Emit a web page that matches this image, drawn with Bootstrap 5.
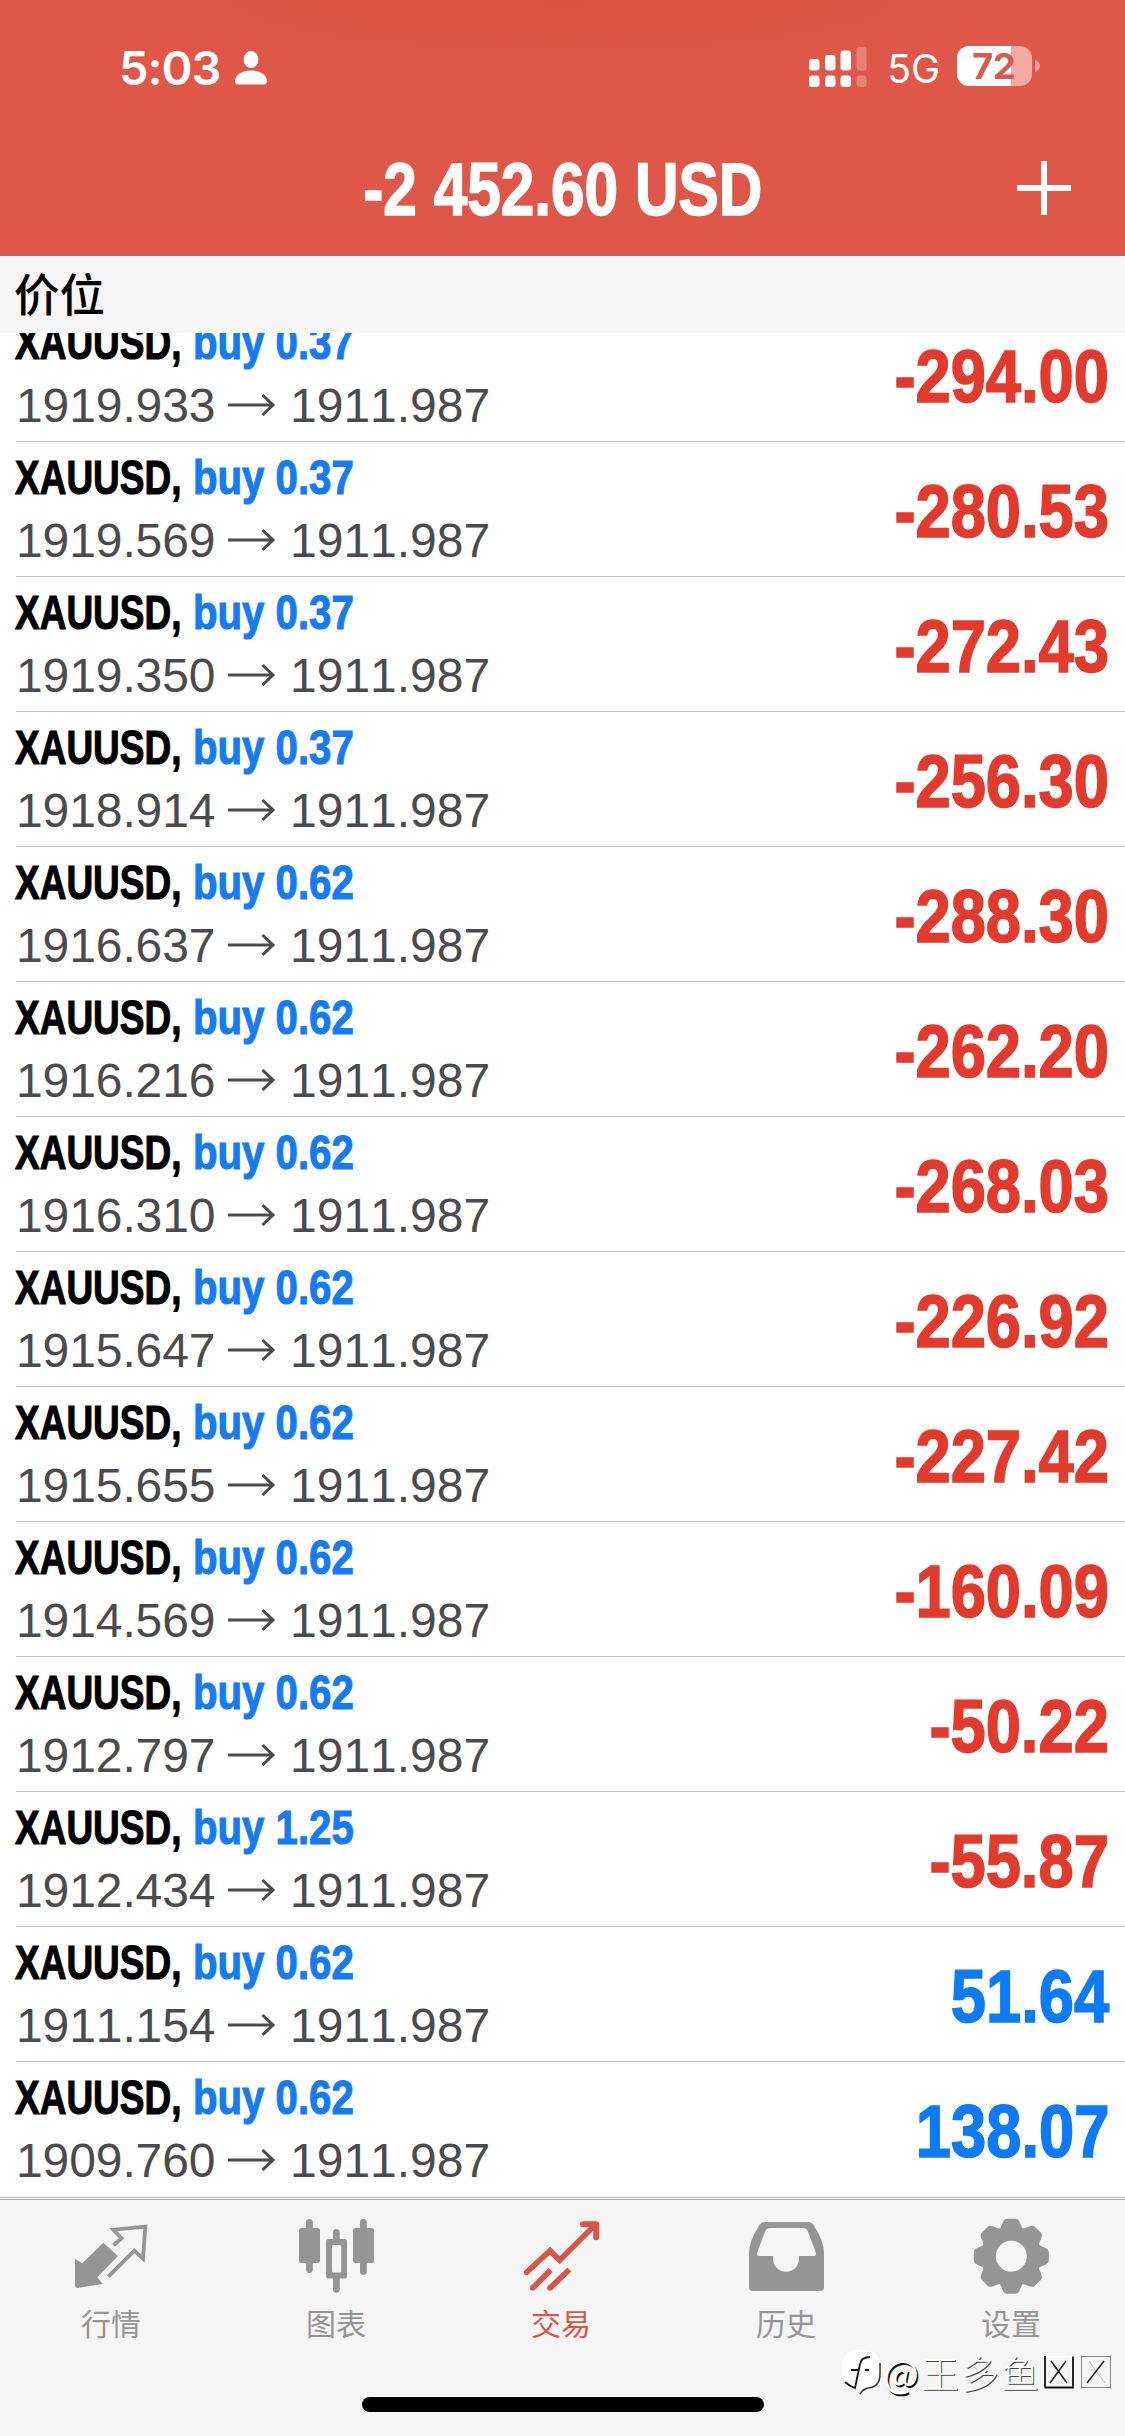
<!DOCTYPE html>
<html lang="zh-CN">
<head>
<meta charset="utf-8">
<meta name="viewport" content="width=device-width, initial-scale=1">
<title>交易</title>
<link href="https://cdn.jsdelivr.net/npm/bootstrap@5.3.0/dist/css/bootstrap.min.css" rel="stylesheet">
<style>
  body { width: 1125px; height: 2436px; overflow: hidden; background: #fff; font-family: "Liberation Sans", "Noto Sans CJK SC", sans-serif; font-kerning: none; }
  .screen { width: 1125px; height: 2436px; }
  .app-head { height: 256px; background: radial-gradient(ellipse 340px 50px at 562px 0, #dc5243, #df5748); border-bottom: 2px solid #c9605a; color: #fff; }
  .status { height: 108px; padding: 28px 85px 0 119px; font-family: Inter, sans-serif; }
  .clock { font-size: 47px; font-weight: 600; line-height: 80px; letter-spacing: -1px; }
  .net { font-size: 39px; line-height: 81px; margin-left: 20px; margin-right: 17px; }
  .title-bar { height: 146px; }
  .narrow { display: inline-block; white-space: pre; font-weight: 700; transform-origin: 0 50%; -webkit-text-stroke: 1.1px currentColor; }
  .total { font-size: 74px; line-height: 80px; transform: scaleX(.815); transform-origin: 50% 50%; margin-top: 42px; -webkit-text-stroke-width: 1.6px; }
  .plus { right: 53px; top: 52px; }
  .section-head { height: 77px; padding: 0 14px; background: #f6f6f6; font: 500 45.500px/73px "Noto Sans CJK SC", sans-serif; color: #000; }
  .deals { height: 1864px; overflow: hidden; }
  .deal { height: 135px; flex: none; margin-left: 16px; padding: 0 16px 0 0; border-bottom: 1px solid #c4c4c6; }
  .deal:last-child { border-color: transparent; }
  .head-line { height: 62px; font-size: 49px; line-height: 62px; margin-left: -1px; }
  .sym { width: 178px; color: #000; transform: scaleX(.755); }
  .side { color: #147bf3; transform: scaleX(.82); }
  .prices { height: 65px; font-size: 48px; line-height: 65px; color: #4b4b4e; }
  .price { width: 197px; letter-spacing: -.1px; }
  .arrow { width: 77px; padding-left: 15px; }
  .profit { font-size: 74px; line-height: 80px; transform: scaleX(.855); transform-origin: 100% 50%; margin-top: 6px; color: #e23b2e; -webkit-text-stroke-width: 1.6px; }
  .gain { color: #0d7bf8; }
  .tabs { height: 239px; background: #f5f5f5; border-top: 1px solid #b8b8b8; box-shadow: inset 0 1px #f5f5f5, inset 0 2px #a9a9a9; color: #959595; }
  .tab-row { margin-left: -1.500px; margin-right: 1.500px; padding-top: 17px; }
  .tab-row svg { display: block; }
  .tab-item { color: inherit; flex: 1 1 0; font: 400 30px/44px "Noto Sans CJK SC", sans-serif; text-decoration: none; }
  .tab-item span { margin-top: 5px; }
  .tab-item.on { color: #d95549; }
  .home { width: 402px; height: 15px; left: 362px; bottom: 24px; background: #000; }
  .mark-line { left: 841px; bottom: 38px; height: 52px; font: 400 38px/52px "Noto Sans CJK SC", sans-serif; color: #fdfdfd; text-shadow: 1.500px 1.500px 0 #111; }
  .mark-line .han { letter-spacing: 2px; margin-left: 2px; font-weight: 300; text-shadow: 1px 1px 0 #444; }
</style>
<script src="https://cdn.jsdelivr.net/npm/bootstrap@5.3.0/dist/js/bootstrap.bundle.min.js"></script>
</head>
<body>
<div class="screen d-flex flex-column position-relative">
  <header class="app-head">
    <div class="status d-flex align-items-start justify-content-between">
      <div class="d-flex">
        <span class="clock">5:03</span>
        <svg width="32" height="34" viewBox="0 0 32 34" fill="#fff" style="margin:23px 0 0 15px"><ellipse cx="16" cy="8.500" rx="7.400" ry="8.500"/><path d="M0 30C0 24 7 19.500 16 19.500S32 24 32 30Q32 33.500 28.500 33.500H3.500Q0 33.500 0 30Z"/></svg>
      </div>
      <div class="d-flex">
        <svg width="58" height="40" viewBox="0 0 58 40" fill="#fff" style="margin-top:19px"><rect y="12" width="10.500" height="11.500" rx="3"/><rect y="28.500" width="10.500" height="11.500" rx="3"/><rect x="16" y="8" width="10.500" height="15.500" rx="3"/><rect x="16" y="28.500" width="10.500" height="11.500" rx="3"/><rect x="31.500" y="3.500" width="10.500" height="20" rx="3"/><rect x="31.500" y="28.500" width="10.500" height="11.500" rx="3"/><g opacity=".25"><rect x="47.500" width="10" height="23.500" rx="3"/><rect x="47.500" y="28.500" width="10" height="11.500" rx="3"/></g></svg>
        <span class="net">5G</span>
        <svg width="83" height="40" viewBox="0 0 83 40" style="margin-top:18px"><defs><clipPath id="charge"><path d="M0 0H54V40H0Z"/></clipPath></defs><rect width="75" height="40" rx="12" fill="#f3aaa2"/><rect width="75" height="40" rx="12" fill="#fff" clip-path="url(#charge)"/><path d="M78 14Q83 16 83 20T78 26Z" fill="#f0a098"/><text x="37" y="33" text-anchor="middle" font-family="Inter, sans-serif" font-size="36" font-weight="700" fill="#d65a50">72</text></svg>
      </div>
    </div>
    <div class="title-bar d-flex justify-content-center align-items-start position-relative">
      <h1 class="narrow total mb-0">-2 452.60 USD</h1>
      <svg class="plus position-absolute" width="56" height="56" viewBox="0 0 56 56" stroke="#fff" stroke-width="6"><path d="M28 1V55M1 28H55"/></svg>
    </div>
  </header>
  <div class="section-head">价位</div>

  <main class="deals d-flex flex-column justify-content-end">
    <div class="deal d-flex justify-content-between align-items-center"><div><div class="head-line d-flex"><span class="narrow sym">XAUUSD,</span><span class="narrow side">buy 0.37</span></div><div class="prices d-flex align-items-center"><span class="price">1919.933</span><svg class="arrow" width="78" height="24"><use href="#to"/></svg><span>1911.987</span></div></div><span class="narrow profit">-294.00</span></div>
    <div class="deal d-flex justify-content-between align-items-center"><div><div class="head-line d-flex"><span class="narrow sym">XAUUSD,</span><span class="narrow side">buy 0.37</span></div><div class="prices d-flex align-items-center"><span class="price">1919.569</span><svg class="arrow" width="78" height="24"><use href="#to"/></svg><span>1911.987</span></div></div><span class="narrow profit">-280.53</span></div>
    <div class="deal d-flex justify-content-between align-items-center"><div><div class="head-line d-flex"><span class="narrow sym">XAUUSD,</span><span class="narrow side">buy 0.37</span></div><div class="prices d-flex align-items-center"><span class="price">1919.350</span><svg class="arrow" width="78" height="24"><use href="#to"/></svg><span>1911.987</span></div></div><span class="narrow profit">-272.43</span></div>
    <div class="deal d-flex justify-content-between align-items-center"><div><div class="head-line d-flex"><span class="narrow sym">XAUUSD,</span><span class="narrow side">buy 0.37</span></div><div class="prices d-flex align-items-center"><span class="price">1918.914</span><svg class="arrow" width="78" height="24"><use href="#to"/></svg><span>1911.987</span></div></div><span class="narrow profit">-256.30</span></div>
    <div class="deal d-flex justify-content-between align-items-center"><div><div class="head-line d-flex"><span class="narrow sym">XAUUSD,</span><span class="narrow side">buy 0.62</span></div><div class="prices d-flex align-items-center"><span class="price">1916.637</span><svg class="arrow" width="78" height="24"><use href="#to"/></svg><span>1911.987</span></div></div><span class="narrow profit">-288.30</span></div>
    <div class="deal d-flex justify-content-between align-items-center"><div><div class="head-line d-flex"><span class="narrow sym">XAUUSD,</span><span class="narrow side">buy 0.62</span></div><div class="prices d-flex align-items-center"><span class="price">1916.216</span><svg class="arrow" width="78" height="24"><use href="#to"/></svg><span>1911.987</span></div></div><span class="narrow profit">-262.20</span></div>
    <div class="deal d-flex justify-content-between align-items-center"><div><div class="head-line d-flex"><span class="narrow sym">XAUUSD,</span><span class="narrow side">buy 0.62</span></div><div class="prices d-flex align-items-center"><span class="price">1916.310</span><svg class="arrow" width="78" height="24"><use href="#to"/></svg><span>1911.987</span></div></div><span class="narrow profit">-268.03</span></div>
    <div class="deal d-flex justify-content-between align-items-center"><div><div class="head-line d-flex"><span class="narrow sym">XAUUSD,</span><span class="narrow side">buy 0.62</span></div><div class="prices d-flex align-items-center"><span class="price">1915.647</span><svg class="arrow" width="78" height="24"><use href="#to"/></svg><span>1911.987</span></div></div><span class="narrow profit">-226.92</span></div>
    <div class="deal d-flex justify-content-between align-items-center"><div><div class="head-line d-flex"><span class="narrow sym">XAUUSD,</span><span class="narrow side">buy 0.62</span></div><div class="prices d-flex align-items-center"><span class="price">1915.655</span><svg class="arrow" width="78" height="24"><use href="#to"/></svg><span>1911.987</span></div></div><span class="narrow profit">-227.42</span></div>
    <div class="deal d-flex justify-content-between align-items-center"><div><div class="head-line d-flex"><span class="narrow sym">XAUUSD,</span><span class="narrow side">buy 0.62</span></div><div class="prices d-flex align-items-center"><span class="price">1914.569</span><svg class="arrow" width="78" height="24"><use href="#to"/></svg><span>1911.987</span></div></div><span class="narrow profit">-160.09</span></div>
    <div class="deal d-flex justify-content-between align-items-center"><div><div class="head-line d-flex"><span class="narrow sym">XAUUSD,</span><span class="narrow side">buy 0.62</span></div><div class="prices d-flex align-items-center"><span class="price">1912.797</span><svg class="arrow" width="78" height="24"><use href="#to"/></svg><span>1911.987</span></div></div><span class="narrow profit">-50.22</span></div>
    <div class="deal d-flex justify-content-between align-items-center"><div><div class="head-line d-flex"><span class="narrow sym">XAUUSD,</span><span class="narrow side">buy 1.25</span></div><div class="prices d-flex align-items-center"><span class="price">1912.434</span><svg class="arrow" width="78" height="24"><use href="#to"/></svg><span>1911.987</span></div></div><span class="narrow profit">-55.87</span></div>
    <div class="deal d-flex justify-content-between align-items-center"><div><div class="head-line d-flex"><span class="narrow sym">XAUUSD,</span><span class="narrow side">buy 0.62</span></div><div class="prices d-flex align-items-center"><span class="price">1911.154</span><svg class="arrow" width="78" height="24"><use href="#to"/></svg><span>1911.987</span></div></div><span class="narrow profit gain">51.64</span></div>
    <div class="deal d-flex justify-content-between align-items-center"><div><div class="head-line d-flex"><span class="narrow sym">XAUUSD,</span><span class="narrow side">buy 0.62</span></div><div class="prices d-flex align-items-center"><span class="price">1909.760</span><svg class="arrow" width="78" height="24"><use href="#to"/></svg><span>1911.987</span></div></div><span class="narrow profit gain">138.07</span></div>
  </main>

  <footer class="tabs">
    <nav class="tab-row d-flex">
      <a class="tab-item d-flex flex-column align-items-center"><svg width="80" height="80" viewBox="0 0 80 80" fill="currentColor"><path d="M4 44L11.300 48.300L32.300 27.700L47 41L26.300 62.300L31.700 69L6.300 73Q4 73 4 71Z"/><path d="M42.500 30.300L50.500 23.300L42.300 14.700L74.300 11.700L72 43.700L63.300 35.700L37.300 61.700" fill="none" stroke="currentColor" stroke-width="3.800"/></svg><span>行情</span></a>
      <a class="tab-item d-flex flex-column align-items-center"><svg width="80" height="80" viewBox="0 0 80 80" fill="currentColor"><rect x="3" y="13" width="21" height="35" rx="2.500"/><rect x="10" y="4" width="6.800" height="54" rx="3.400"/><path fill-rule="evenodd" d="M32.500 24H48.500Q51 24 51 26.500V61Q51 63.500 48.500 63.500H32.500Q30 63.500 30 61V26.500Q30 24 32.500 24ZM37.500 30Q36 30 36 31.500V56Q36 57.500 37.500 57.500H43.800Q45.300 57.500 45.300 56V31.500Q45.300 30 43.800 30Z"/><path d="M37 26V17.400a3.400 3.400 0 0 1 6.800 0V26ZM37 62V74.300a3.400 3.400 0 0 0 6.800 0V62Z"/><rect x="57" y="13" width="21" height="35" rx="2.500"/><rect x="64" y="4" width="6.800" height="56" rx="3.400"/></svg><span>图表</span></a>
      <a class="tab-item on d-flex flex-column align-items-center"><svg width="80" height="80" viewBox="0 0 80 80" fill="none" stroke="currentColor" stroke-width="5.600"><path d="M5.700 57.300L29 35.700L38.700 45.300L74 10" stroke-linecap="round"/><path d="M62 9.200H75.200V22.300" stroke-width="6" stroke-linecap="round" stroke-linejoin="round"/><path d="M29.700 55L11.700 73M48.300 54.500L29 73"/><path d="M11.700 73h.01M29 73h.01" stroke-linecap="round"/></svg><span>交易</span></a>
      <a class="tab-item d-flex flex-column align-items-center"><svg width="80" height="80" viewBox="0 0 80 80" fill="currentColor"><path fill-rule="evenodd" d="M19 7H62Q65.500 7 67.500 10Q78 26 78 38V72Q78 76 74 76H7Q3 76 3 72V38Q3 26 13.500 10Q15.500 7 19 7ZM24 13Q20.500 13 19.500 15.500L11.300 37Q10 41 13 41H27V43.700a13 13 0 0 0 26 0V41H68Q71 41 69.700 37L61.500 15.500Q60.500 13 57 13Z"/></svg><span>历史</span></a>
      <a class="tab-item d-flex flex-column align-items-center"><svg width="80" height="80" viewBox="-40.300 -41.300 80 80" fill="currentColor"><defs><path id="cog" d="M-13-26.500C-8.500-29-9.500-37.500-4-37.500H4C9.500-37.500 8.500-29 13-26.500Z"/></defs><circle r="22.500" fill="none" stroke="currentColor" stroke-width="14"/><use href="#cog"/><use href="#cog" transform="rotate(45)"/><use href="#cog" transform="rotate(90)"/><use href="#cog" transform="rotate(135)"/><use href="#cog" transform="rotate(180)"/><use href="#cog" transform="rotate(225)"/><use href="#cog" transform="rotate(270)"/><use href="#cog" transform="rotate(315)"/></svg><span>设置</span></a>
    </nav>
  </footer>
  <div class="home position-absolute rounded-pill"></div>
  <div class="mark-line position-absolute d-flex align-items-center">
    <svg width="42" height="46" viewBox="0 0 42 46" fill="none"><rect x="1" y="1" width="38" height="38" rx="14" fill="#fff"/><path d="M29 8Q20 8 19 15L14 39Q8 37 4 33M10 21H18M24 21H28" stroke="#111" stroke-width="1.800"/><path d="M39 14V25Q39 38 27 39Q22 40 19 45" stroke="#333" stroke-width="1.500"/></svg>
    <span>@</span><span class="han">王多鱼</span>
    <svg width="72" height="36" viewBox="0 0 72 36" fill="none"><rect x="3.500" y="2.500" width="28" height="31" stroke="#fff" stroke-width="2"/><path d="M3.500 33.500H32V2.500M4 2V33" stroke="#111" stroke-width="1.800"/><path d="M10 7L26 29M25 7L9 29" stroke="#222" stroke-width="1.500"/><rect x="40.500" y="2.500" width="29" height="31" stroke="#888"/><path d="M48 7L64 29" stroke="#bbb"/><path d="M63 7L46 29" stroke="#222" stroke-width="1.500"/></svg>
  </div>
</div>
<svg width="0" height="0" class="position-absolute"><symbol id="to" overflow="visible"><path d="M0 12H45M34.500 2L45 12L34.500 22" fill="none" stroke="#4b4b4e" stroke-width="3"/></symbol></svg>
</body>
</html>
